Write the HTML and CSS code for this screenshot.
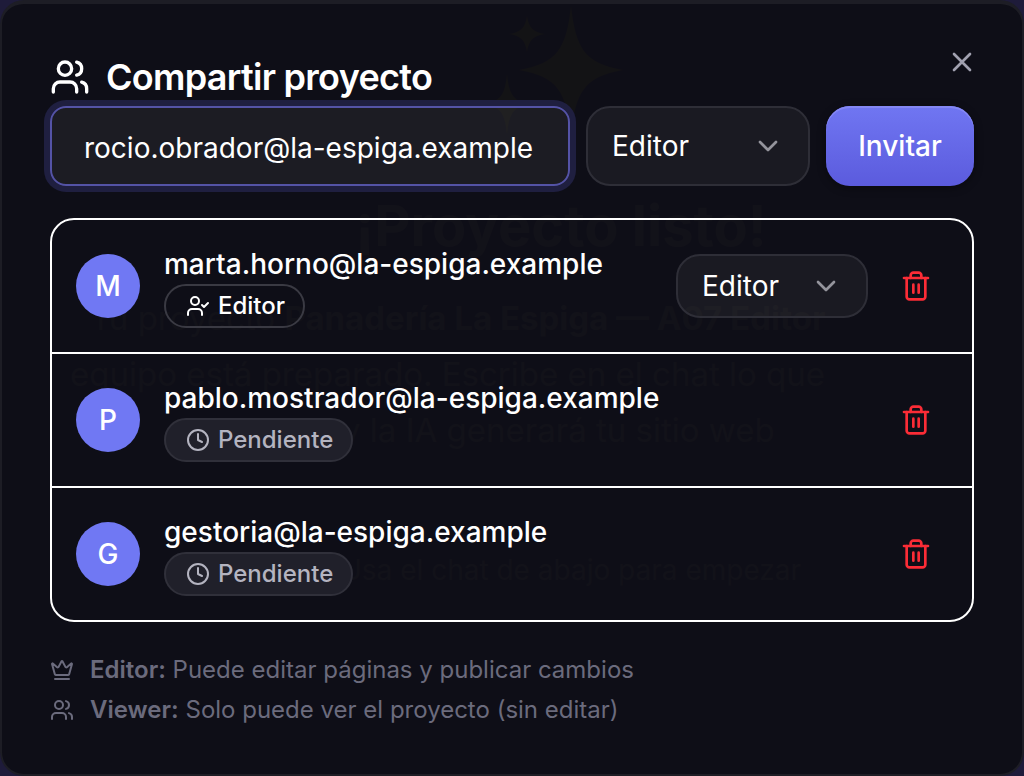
FILE: index.html
```html
<!DOCTYPE html>
<html lang="es">
  <head>
    <meta charset="UTF-8" />
    <meta name="viewport" content="width=device-width, initial-scale=1.0" />
    <title>Compartir proyecto</title>
    <link rel="stylesheet" href="styles.css" />
  </head>
  <body>
    <!-- Icons -->
    <svg class="sprite" aria-hidden="true">
      <symbol id="users" viewBox="0 0 24 24">
        <path d="M16 21v-2a4 4 0 0 0-4-4H6a4 4 0 0 0-4 4v2" />
        <circle cx="9" cy="7" r="4" />
        <path d="M22 21v-2a4 4 0 0 0-3-3.87" />
        <path d="M16 3.13a4 4 0 0 1 0 7.75" />
      </symbol>
      <symbol id="user-check" viewBox="0 0 24 24">
        <path d="M16 21v-2a4 4 0 0 0-4-4H6a4 4 0 0 0-4 4v2" />
        <circle cx="9" cy="7" r="4" />
        <path d="m16 11 2 2 4-4" />
      </symbol>
      <symbol id="clock" viewBox="0 0 24 24">
        <circle cx="12" cy="12" r="10" />
        <path d="M12 6v6l4 2" />
      </symbol>
      <symbol id="trash" viewBox="0 0 24 24">
        <path d="M3 6h18" />
        <path d="M19 6v14c0 1-1 2-2 2H7c-1 0-2-1-2-2V6" />
        <path d="M8 6V4c0-1 1-2 2-2h4c1 0 2 1 2 2v2" />
        <path d="M10 11v6M14 11v6" />
      </symbol>
      <symbol id="crown" viewBox="0 0 24 24">
        <path d="M11.562 3.266a.5.5 0 0 1 .876 0L15.39 8.87a1 1 0 0 0 1.516.294L21.183 5.5a.5.5 0 0 1 .798.519l-2.834 10.246a1 1 0 0 1-.956.734H5.81a1 1 0 0 1-.957-.734L2.02 6.02a.5.5 0 0 1 .798-.519l4.276 3.664a1 1 0 0 0 1.516-.294z" />
        <path d="M5 21h14" />
      </symbol>
      <symbol id="chevron" viewBox="0 0 24 24">
        <path d="m6 9 6 6 6-6" />
      </symbol>
      <symbol id="close" viewBox="0 0 24 24">
        <path d="M18 6 6 18M6 6l12 12" />
      </symbol>
    </svg>

    <!-- Welcome screen under the dialog -->
    <div class="welcome" aria-hidden="true">
      <svg class="sparkles" viewBox="-12 0 128 128">
        <path d="M76 0c5 42 13 57 52 64-39 7-47 22-52 64-5-42-13-57-52-64 39-7 47-22 52-64z" />
        <path d="M32 10c2 12 6 16 18 18-12 2-16 6-18 18-2-12-6-16-18-18 12-2 16-6 18-18z" />
        <path d="M12 68c2 20 6 26 20 30-14 4-18 10-20 30-2-20-6-26-20-30 14-4 18-10 20-30z" />
      </svg>
      <p class="welcome-title">¡Proyecto listo!</p>
      <div class="welcome-text">
        <p class="line-name">Tu proyecto <strong>Panadería La Espiga — A07 Editor</strong></p>
        <p>equipo está preparado. Escribe en el chat lo que</p>
        <p class="line-last">y la IA generará tu sitio web</p>
      </div>
      <p class="welcome-hint">Usa el chat de abajo para empezar</p>
    </div>

    <main class="dialog" role="dialog" aria-labelledby="dialogTitle">
      <header class="dialog-header">
        <h1 id="dialogTitle" class="dialog-title">
          <svg class="icon icon-title"><use href="#users" /></svg>
          Compartir proyecto
        </h1>
        <button class="close-button" type="button" aria-label="Cerrar">
          <svg class="icon icon-close"><use href="#close" /></svg>
        </button>
      </header>

      <form class="invite-form" onsubmit="event.preventDefault();">
        <input class="email-input" type="email" id="email" aria-label="Email" value="rocio.obrador@la-espiga.example" />
        <div class="select-box">
          <select class="role-select" aria-label="Rol">
            <option>Editor</option>
            <option>Viewer</option>
          </select>
          <svg class="icon select-arrow"><use href="#chevron" /></svg>
        </div>
        <button class="invite-button" type="submit">Invitar</button>
      </form>

      <ul class="members">
        <li class="member">
          <span class="avatar">M</span>
          <div class="member-info">
            <span class="member-email">marta.horno@la-espiga.example</span>
            <span class="badge">
              <svg class="icon icon-small"><use href="#user-check" /></svg>
              Editor
            </span>
          </div>
          <div class="select-box select-box-small">
            <select class="role-select" aria-label="Rol de marta.horno">
              <option>Editor</option>
              <option>Viewer</option>
            </select>
            <svg class="icon select-arrow"><use href="#chevron" /></svg>
          </div>
          <button class="delete-button" type="button" aria-label="Eliminar">
            <svg class="icon icon-trash"><use href="#trash" /></svg>
          </button>
        </li>
        <li class="member">
          <span class="avatar">P</span>
          <div class="member-info">
            <span class="member-email">pablo.mostrador@la-espiga.example</span>
            <span class="badge badge-pending">
              <svg class="icon icon-small"><use href="#clock" /></svg>
              Pendiente
            </span>
          </div>
          <button class="delete-button" type="button" aria-label="Eliminar">
            <svg class="icon icon-trash"><use href="#trash" /></svg>
          </button>
        </li>
        <li class="member">
          <span class="avatar">G</span>
          <div class="member-info">
            <span class="member-email">gestoria@la-espiga.example</span>
            <span class="badge badge-pending">
              <svg class="icon icon-small"><use href="#clock" /></svg>
              Pendiente
            </span>
          </div>
          <button class="delete-button" type="button" aria-label="Eliminar">
            <svg class="icon icon-trash"><use href="#trash" /></svg>
          </button>
        </li>
      </ul>

      <div class="legend">
        <p class="legend-row">
          <svg class="icon icon-small"><use href="#crown" /></svg>
          <span><strong>Editor:</strong> Puede editar páginas y publicar cambios</span>
        </p>
        <p class="legend-row">
          <svg class="icon icon-small"><use href="#users" /></svg>
          <span><strong>Viewer:</strong> Solo puede ver el proyecto (sin editar)</span>
        </p>
      </div>
    </main>
  </body>
</html>
```

FILE: styles.css
```css
* {
  box-sizing: border-box;
}

body {
  margin: 0;
  min-height: 100vh;
  display: flex;
  background-color: #1e1b3a;
  color: #fff;
  font-family: Inter, "Liberation Sans", sans-serif;
  font-size: 28px;
}

p,
h1,
ul {
  margin: 0;
  padding: 0;
}

button,
input,
select {
  font-family: inherit;
  font-size: 28px;
  color: inherit;
}

.sprite {
  position: absolute;
  width: 0;
  height: 0;
}

.icon {
  flex-shrink: 0;
  fill: none;
  stroke: currentColor;
  stroke-width: 2;
  stroke-linecap: round;
  stroke-linejoin: round;
}

/* Dialog */
.dialog {
  position: relative;
  z-index: 1;
  flex: 1;
  display: flex;
  flex-direction: column;
  padding: 42px 48px 48px;
  background-color: rgba(14, 14, 21, 0.95);
  border: 2px solid #1d1d25;
  border-top: 4px solid #1d1d25;
  border-radius: 24px;
}

.dialog-header {
  display: flex;
  justify-content: space-between;
}

.dialog-title {
  display: flex;
  align-items: center;
  gap: 16px;
  padding-top: 8px;
  font-size: 36px;
  font-weight: 600;
  line-height: 46px;
  letter-spacing: -0.02em;
}

.icon-title {
  width: 40px;
  height: 40px;
}

.close-button {
  display: flex;
  height: 32px;
  padding: 0;
  margin-right: -4px;
  background: none;
  border: none;
  color: #a1a1b0;
  cursor: pointer;
}

.icon-close {
  width: 32px;
  height: 32px;
}

/* Invite form */
.invite-form {
  display: flex;
  gap: 16px;
  margin-top: 6px;
}

.email-input {
  flex: 1;
  min-width: 0;
  height: 80px;
  padding: 4px 32px 0;
  background-color: rgba(255, 255, 240, 0.06);
  border: 2px solid #5453a6;
  border-radius: 16px;
  box-shadow: 0 0 0 6px #1f1f40;
  outline: none;
}

.select-box {
  position: relative;
  display: flex;
  width: 224px;
  height: 80px;
}

.select-box-small {
  width: 192px;
  height: 64px;
}

.role-select {
  appearance: none;
  width: 100%;
  padding: 0 24px;
  background-color: rgba(255, 255, 255, 0.05);
  border: 2px solid #2e2e37;
  border-radius: 24px;
  outline: none;
}

.select-arrow {
  position: absolute;
  top: 50%;
  right: 26px;
  width: 32px;
  height: 32px;
  margin-top: -16px;
  color: #94949c;
  pointer-events: none;
}

.invite-button {
  width: 148px;
  height: 80px;
  padding: 0;
  background: linear-gradient(#7076f2, #5b5bdd);
  border: none;
  border-radius: 24px;
  box-shadow: inset 0 2px 0 #8487f4, 0 2px 8px rgba(0, 0, 0, 0.4);
  font-weight: 500;
  cursor: pointer;
}

/* Members list */
.members {
  margin-top: 32px;
  border: 2px solid #fff;
  border-radius: 24px;
  list-style: none;
}

.member {
  display: flex;
  align-items: center;
  gap: 16px;
  height: 134px;
  padding: 0 24px;
  border-bottom: 2px solid #fff;
}

.member:last-child {
  height: 132px;
  border-bottom: none;
}

.avatar {
  display: flex;
  align-items: center;
  justify-content: center;
  width: 64px;
  height: 64px;
  margin-right: 8px;
  background-color: #7078f3;
  border-radius: 50%;
  font-weight: 500;
}

.member-info {
  flex: 1;
  display: flex;
  flex-direction: column;
  align-items: flex-start;
}

.member-email {
  font-weight: 500;
  line-height: 40px;
}

.badge {
  display: flex;
  align-items: center;
  gap: 8px;
  height: 44px;
  padding: 0 18px 0 20px;
  border: 2px solid #3a3a43;
  border-radius: 22px;
  font-size: 24px;
  font-weight: 500;
  line-height: 38px;
}

.badge-pending {
  background-color: #20202a;
  border-color: #30303a;
  color: #b4b4c0;
}

.icon-small {
  width: 24px;
  height: 24px;
}

.delete-button {
  display: flex;
  padding: 16px;
  background: none;
  border: none;
  color: #fb2c36;
  cursor: pointer;
}

.icon-trash {
  width: 32px;
  height: 32px;
}

/* Role legend */
.legend {
  display: flex;
  flex-direction: column;
  gap: 8px;
  margin-top: 32px;
  color: #6b6b7d;
  font-size: 24px;
  line-height: 32px;
}

.legend-row {
  display: flex;
  align-items: center;
  gap: 16px;
}

.legend strong {
  font-weight: 600;
}

/* Welcome screen, barely visible through the dialog */
.welcome {
  position: absolute;
  top: 0;
  left: 70px;
  right: 0;
  color: #66606a;
  text-align: center;
}

.sparkles {
  display: block;
  width: 128px;
  height: 128px;
  margin: 6px auto 60px;
  fill: #7a7020;
  overflow: visible;
}

.welcome-title {
  padding-left: 28px;
  font-size: 56px;
  font-weight: 700;
  line-height: 64px;
}

.welcome-text {
  margin-top: 32px;
  font-size: 33px;
  line-height: 56px;
  text-align: left;
}

.line-name {
  padding-left: 20px;
}

.line-last {
  padding-left: 272px;
}

.welcome-hint {
  margin-top: 92px;
  padding-left: 48px;
  font-size: 28px;
  line-height: 40px;
}
```
